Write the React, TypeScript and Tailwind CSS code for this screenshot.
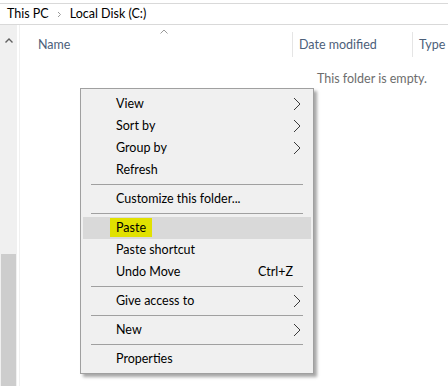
import { ReactNode } from "react";

type Item =
  | { kind: "item"; label: string; sub?: boolean; shortcut?: string; active?: boolean }
  | { kind: "sep" };

const MENU: Item[] = [
  { kind: "item", label: "View", sub: true },
  { kind: "item", label: "Sort by", sub: true },
  { kind: "item", label: "Group by", sub: true },
  { kind: "item", label: "Refresh" },
  { kind: "sep" },
  { kind: "item", label: "Customize this folder..." },
  { kind: "sep" },
  { kind: "item", label: "Paste", active: true },
  { kind: "item", label: "Paste shortcut" },
  { kind: "item", label: "Undo Move", shortcut: "Ctrl+Z" },
  { kind: "sep" },
  { kind: "item", label: "Give access to", sub: true },
  { kind: "sep" },
  { kind: "item", label: "New", sub: true },
  { kind: "sep" },
  { kind: "item", label: "Properties" },
];

function Chevron() {
  return (
    <svg width="8" height="14" viewBox="0 0 8 14" className="shrink-0">
      <polyline points="1,1 7,7 1,13" fill="none" stroke="#3b3b3b" strokeWidth="1" />
    </svg>
  );
}

function MenuRow({ item }: { item: Item }) {
  if (item.kind === "sep") {
    return (
      <div className="h-[7px] flex items-center px-[10px]">
        <div className="h-px w-full bg-[#a0a0a0]" />
      </div>
    );
  }
  let label: ReactNode = item.label;
  if (item.active) {
    label = <span className="bg-[#e1e100] -mx-[6px] px-[6px] py-[2px]">{item.label}</span>;
  }
  return (
    <div
      className={`h-[22px] mx-[2px] flex items-center pl-[33px] pr-[10px] ${
        item.active ? "bg-[#d9d9d9]" : ""
      }`}
    >
      <span className="flex-1">{label}</span>
      {item.shortcut && <span className="mr-[8px]">{item.shortcut}</span>}
      {item.sub && <Chevron />}
    </div>
  );
}

export default function App() {
  return (
    <div
      className="relative w-[448px] h-[386px] bg-white overflow-hidden text-[12.5px] text-black"
      style={{ fontFamily: '"Segoe UI", Lato, sans-serif' }}
    >
      {/* address bar */}
      <div className="mt-[3px] h-[22px] border-y border-[#d9d9d9] flex items-center pl-[7px]">
        <span>This PC</span>
        <svg width="5" height="7" viewBox="0 0 5 7" className="mx-[8px]">
          <polyline points="1,1 3.5,3.5 1,6" fill="none" stroke="#9a9a9a" strokeWidth="1" />
        </svg>
        <span>Local Disk (C:)</span>
      </div>

      <div className="flex h-[361px]">
        {/* nav pane scrollbar */}
        <div className="w-[17px] bg-[#f0f0f0] flex flex-col">
          <div className="h-[30px] flex items-center justify-center">
            <svg width="8" height="5" viewBox="0 0 8 5">
              <polyline points="0.5,4.5 4,1 7.5,4.5" fill="none" stroke="#606060" strokeWidth="1.4" />
            </svg>
          </div>
          <div className="flex-1" />
          <div className="h-[132px] mx-px bg-[#cdcdcd]" />
        </div>
        <div className="w-[3px] border-r border-[#f0f0f0]" />

        {/* file list */}
        <div className="flex-1 flex flex-col">
          <div className="h-[32px] flex items-end text-[#4c607a] relative">
            <div className="w-[272px] h-[25px] flex items-center pl-[18px] pt-px relative">
              Name
              <svg
                width="8"
                height="5"
                viewBox="0 0 8 5"
                className="absolute left-[140px] top-[-3px]"
              >
                <polyline points="0.5,4.5 4,1 7.5,4.5" fill="none" stroke="#9a9a9a" strokeWidth="1" />
              </svg>
            </div>
            <div className="w-[120px] h-[25px] flex items-center border-l border-[#e5e5e5] pl-[6px] pt-px">
              Date modified
            </div>
            <div className="flex-1 h-[25px] flex items-center border-l border-[#e5e5e5] pl-[6px] pt-px">
              Type
            </div>
          </div>
          <div className="pl-[297px] pt-[13px] text-[#6d6d6d]">This folder is empty.</div>
        </div>
      </div>

      {/* context menu */}
      <div className="absolute left-[80px] top-[88px] w-[234px] bg-[#f0f0f0] border border-[#a0a0a0] pt-[4px] pb-[3px] shadow-[3px_3px_3px_rgba(0,0,0,0.35)]">
        {MENU.map((item, i) => (
          <MenuRow key={i} item={item} />
        ))}
      </div>
    </div>
  );
}
